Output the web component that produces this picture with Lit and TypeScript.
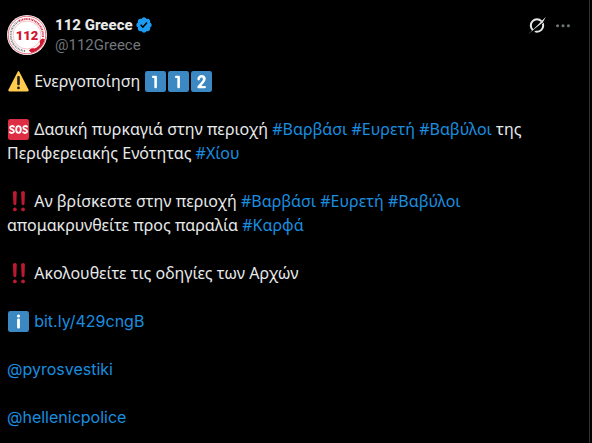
import { LitElement, html, css, svg } from "lit";
import { customElement, property } from "lit/decorators.js";

const emojiArt: Record<string, unknown> = {
  warning: svg`
    <path fill="#ffcc4d" d="M2.65 35C.81 35-.05 33.66.73 32.03L16.58 1.22c.78-1.63 2.06-1.63 2.84 0l15.85 30.81c.78 1.63-.08 2.97-1.92 2.97H2.65z"/>
    <path fill="#231f20" d="M15.58 28.95a2.42 2.42 0 1 1 4.84 0 2.42 2.42 0 0 1-4.84 0zm.19-18.29c0-1.3.96-2.11 2.23-2.11 1.24 0 2.23.84 2.23 2.11v11.6c0 1.27-.99 2.11-2.23 2.11-1.27 0-2.23-.8-2.23-2.11v-11.6z"/>`,
  one: svg`
    <rect width="36" height="36" rx="4" fill="#3b88c3"/>
    <path fill="#fff" d="M16 12h-2c-1.300 0-2-.9-2-1.900 0-1 .7-1.900 2-1.900h4.400c1.300 0 2 .9 2 2.100v17c0 1.500-.9 2.300-2.200 2.300S16 28.800 16 27.300V12z"/>`,
  two: svg`
    <rect width="36" height="36" rx="4" fill="#3b88c3"/>
    <path fill="#fff" d="M23.600 25.600c1.100 0 2.100.6 2.100 2 0 1.300-.9 2-2.100 2H13.100c-1.300 0-2.300-.8-2.300-2.100 0-.6.4-1.200.7-1.600 2.600-3.100 5.400-5.900 7.800-9.400.6-.8 1.100-1.800 1.100-2.900 0-1.300-1-2.500-2.300-2.500-3.600 0-1.900 5.100-4.900 5.100-1.500 0-2.300-1.100-2.300-2.300 0-4 3.500-7.100 7.400-7.100s7 2.500 7 6.600c0 4.400-5 8.800-7.700 12.200h6z"/>`,
  sos: svg`
    <rect width="36" height="36" rx="4" fill="#dd2e44"/>
    <g fill="none" stroke="#fff" stroke-width="3.200" stroke-linecap="round" stroke-linejoin="round">
      <path d="M10 13.200C8.600 11.600 3.600 11.400 3.600 14.800c0 3.800 6.600 2.400 6.600 6.200 0 3.600-5.400 3.600-7 1.600"/>
      <ellipse cx="18" cy="18" rx="4" ry="5.700"/>
      <path d="M32.600 13.200c-1.400-1.600-6.400-1.800-6.400 1.600 0 3.800 6.600 2.400 6.600 6.200 0 3.600-5.400 3.600-7 1.600"/>
    </g>`,
  bang: svg`
    <g fill="#be1931">
      <path d="M15 3c0-1.700-1.300-3-3-3S8.500 1.300 8.500 3l.8 19c0 1.500 1 2.500 2.500 2.500s2.500-1 2.500-2.500z"/>
      <circle cx="11.800" cy="31.500" r="3.200"/>
      <path d="M29 3c0-1.700-1.300-3-3-3s-3.500 1.300-3.500 3l.8 19c0 1.500 1 2.500 2.500 2.500s2.500-1 2.500-2.500z"/>
      <circle cx="25.800" cy="31.500" r="3.200"/>
    </g>`,
  info: svg`
    <rect width="36" height="36" rx="4" fill="#3b88c3"/>
    <circle cx="18" cy="8.500" r="2.700" fill="#fff"/>
    <path fill="#fff" d="M15.600 15.200c0-1.500 1-2.300 2.400-2.300s2.400.8 2.400 2.300v12.600c0 1.500-1 2.400-2.400 2.400s-2.400-.9-2.400-2.400z"/>`,
};

@customElement("inline-emoji")
class InlineEmoji extends LitElement {
  @property() name = "";
  @property() label = "";
  static styles = css`
    :host { display: inline-block; width: 21px; height: 21px; margin: 0 1px; vertical-align: -5px; }
    svg { display: block; width: 100%; height: 100%; }
  `;
  render() {
    return html`<svg viewBox="0 0 36 36" role="img" aria-label=${this.label}>${emojiArt[this.name]}</svg>`;
  }
}

@customElement("agency-avatar")
class AgencyAvatar extends LitElement {
  static styles = css`
    :host { display: block; width: 40px; height: 40px; flex: none; }
    svg { display: block; width: 100%; height: 100%; }
    .number { font: 900 13px "Roboto", sans-serif; fill: #cf1730; }
  `;
  render() {
    return html`<svg viewBox="0 0 40 40" role="img" aria-label="112 Greece">
      <circle cx="20" cy="20" r="20" fill="#fff"/>
      <circle cx="20" cy="20" r="18.800" fill="none" stroke="#d9344a" stroke-width=".7"/>
      <path d="M12 6.100A16 16 0 0 1 35.800 22" fill="none" stroke="#d9344a" stroke-width="2" stroke-dasharray="1.300 .7 .8 .6"/>
      <path d="M18 36A16 16 0 0 1 12 6.100" fill="none" stroke="#7d8083" stroke-width="2" stroke-dasharray="1.100 .8 .7 .7"/>
      <circle cx="20" cy="20" r="14" fill="none" stroke="#e58a96" stroke-width=".5"/>
      <path d="M37.800 24c-1.300 6.800-6.500 12.200-13.500 13.700l-2.300-1.900c1-2.300 3.200-3.200 5.600-2.200 2.200-.8 4.100-2.300 5.500-4.500-1.100-2.100-.2-4.700 2.200-5.500z" fill="#cf1730"/>
      <text class="number" x="20" y="25" text-anchor="middle">112</text>
    </svg>`;
  }
}

@customElement("app-root")
class AppRoot extends LitElement {
  static styles = css`
    :host { display: block; background: #000; color: #e7e9ea; min-height: 100vh; box-sizing: border-box; padding-right: 2px; }
    .post { box-sizing: border-box; min-height: 100vh; border-right: 1px solid #2f3336; padding: 15px 16px 12px 7px; }
    .head { display: flex; align-items: flex-start; gap: 8px; }
    .who { flex: 1; min-width: 0; display: flex; flex-direction: column; font: 400 15px/20px "Roboto", sans-serif; }
    .name { display: flex; align-items: center; gap: 2px; font-weight: 800; color: #e7e9ea; text-decoration: none; }
    .name svg { width: 18px; height: 18px; fill: #1d9bf0; }
    .handle { color: #71767b; text-decoration: none; }
    .tools { display: flex; align-items: center; gap: 6px; height: 20px; }
    .tool { display: flex; padding: 0; border: 0; background: none; color: #71767b; cursor: pointer; }
    .tool svg { width: 20px; height: 20px; fill: currentColor; }
    .tool.grok { color: #e7e9ea; }
    .body { margin-top: 14px; font: 400 16px/24px "Noto Sans", sans-serif; }
    .body p { margin: 0 0 24px; }
    .body p:last-child { margin-bottom: 0; }
    .body a { color: #1d9bf0; text-decoration: none; opacity: .92; }
    .body .latin { font-family: "Inter", sans-serif; }
  `;

  tag(text: string) {
    return html`<a href="#">#${text}</a>`;
  }

  render() {
    return html`<article class="post">
      <header class="head">
        <agency-avatar></agency-avatar>
        <div class="who">
          <a class="name" href="#">112 Greece
            <svg viewBox="0 0 22 22" role="img" aria-label="Verified account"><path d="M20.396 11c-.018-.646-.215-1.275-.57-1.816-.354-.54-.852-.972-1.438-1.246.223-.607.27-1.264.14-1.897-.131-.634-.437-1.218-.882-1.687-.47-.445-1.053-.75-1.687-.882-.633-.13-1.290-.083-1.897.14-.273-.587-.704-1.086-1.245-1.440S11.647 1.620 11 1.604c-.646.017-1.273.213-1.813.568s-.969.854-1.240 1.440c-.608-.223-1.267-.272-1.902-.14-.635.130-1.220.436-1.690.882-.445.470-.749 1.055-.878 1.688-.130.633-.080 1.290.144 1.896-.587.274-1.087.705-1.443 1.245-.356.540-.555 1.170-.574 1.817.020.647.218 1.276.574 1.817.356.540.856.972 1.443 1.245-.224.606-.274 1.263-.144 1.896.130.634.433 1.218.877 1.688.470.443 1.054.747 1.687.878.633.132 1.290.084 1.897-.136.274.586.705 1.084 1.246 1.439.540.354 1.170.551 1.816.569.647-.016 1.276-.213 1.817-.567s.972-.854 1.245-1.440c.604.239 1.266.296 1.903.164.636-.132 1.220-.447 1.680-.907.460-.460.776-1.044.908-1.681s.075-1.299-.165-1.903c.586-.274 1.084-.705 1.439-1.246.354-.540.551-1.170.569-1.816zM9.662 14.850l-3.429-3.428 1.293-1.302 2.072 2.072 4.400-4.794 1.347 1.246z"/></svg>
          </a>
          <a class="handle" href="#">@112Greece</a>
        </div>
        <div class="tools">
          <button class="tool grok" aria-label="Grok actions">
            <svg viewBox="0 0 20 20"><circle cx="10" cy="10.500" r="6.200" fill="none" stroke="currentColor" stroke-width="2"/><path d="M2 20.500 19.500 3" stroke="#000" stroke-width="2.400"/><path d="M1 19.500 12.500 8.200 18.800 1.700 15.800 7.400 8 13.600z"/></svg>
          </button>
          <button class="tool" aria-label="More">
            <svg viewBox="0 0 24 24"><circle cx="5.500" cy="13" r="1.800"/><circle cx="12" cy="13" r="1.800"/><circle cx="18.500" cy="13" r="1.800"/></svg>
          </button>
        </div>
      </header>
      <div class="body">
        <p><inline-emoji name="warning" label="Warning"></inline-emoji> Ενεργοποίηση <inline-emoji name="one" label="1"></inline-emoji><inline-emoji name="one" label="1"></inline-emoji><inline-emoji name="two" label="2"></inline-emoji></p>
        <p><inline-emoji name="sos" label="SOS"></inline-emoji> Δασική πυρκαγιά στην περιοχή ${this.tag("Βαρβάσι")} ${this.tag("Ευρετή")} ${this.tag("Βαβύλοι")} της Περιφερειακής Ενότητας ${this.tag("Χίου")}</p>
        <p><inline-emoji name="bang" label="!!"></inline-emoji> Αν βρίσκεστε στην περιοχή ${this.tag("Βαρβάσι")} ${this.tag("Ευρετή")} ${this.tag("Βαβύλοι")} απομακρυνθείτε προς παραλία ${this.tag("Καρφά")}</p>
        <p><inline-emoji name="bang" label="!!"></inline-emoji> Ακολουθείτε τις οδηγίες των Αρχών</p>
        <p><inline-emoji name="info" label="Information"></inline-emoji> <a class="latin" href="#">bit.ly/429cngB</a></p>
        <p><a class="latin" href="#">@pyrosvestiki</a></p>
        <p><a class="latin" href="#">@hellenicpolice</a></p>
      </div>
    </article>`;
  }
}
